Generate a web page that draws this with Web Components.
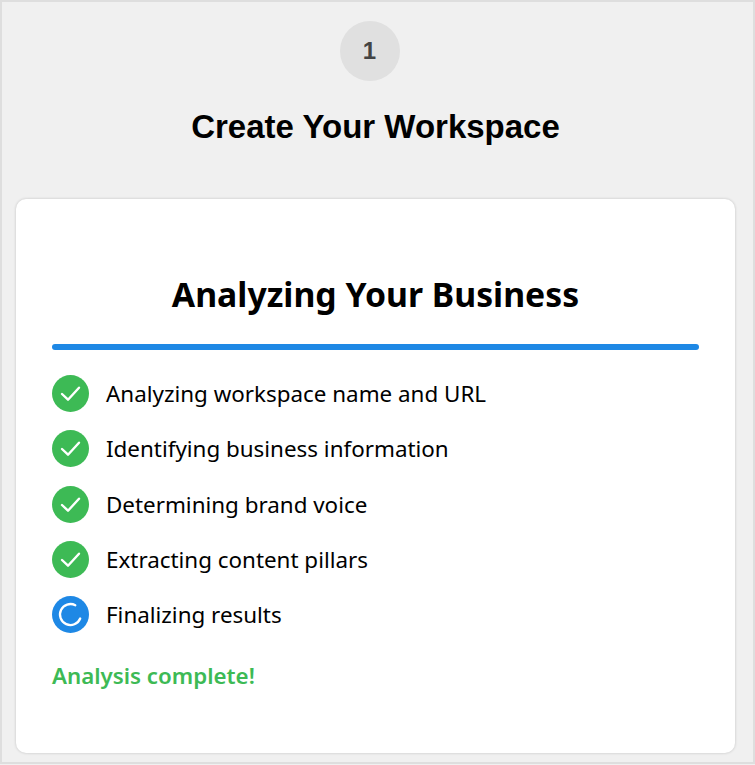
<!DOCTYPE html>
<html><head><meta charset="utf-8">
<style>
html,body{margin:0;padding:0;background:#f0f0f0}
body{width:755px;height:765px;overflow:hidden}
</style></head><body>
<wizard-frame>
  <step-header slot="head" step="1" title-text="Create Your Workspace"></step-header>
  <analysis-card heading="Analyzing Your Business" status="Analysis complete!">
    <task-row state="done">Analyzing workspace name and URL</task-row>
    <task-row state="done">Identifying business information</task-row>
    <task-row state="done">Determining brand voice</task-row>
    <task-row state="done">Extracting content pillars</task-row>
    <task-row state="active">Finalizing results</task-row>
  </analysis-card>
</wizard-frame>
<script>
function def(name, css, html){
  customElements.define(name, class extends HTMLElement{
    connectedCallback(){
      if(this.shadowRoot) return;
      const r=this.attachShadow({mode:'open'});
      r.innerHTML='<style>'+css+'</style>'+(typeof html==='function'?html(this):html);
    }
  });
}
def('wizard-frame',`
:host{display:flex;flex-direction:column;box-sizing:border-box;width:755px;height:764px;
 border:2px solid #dedede;background:#f0f0f0;padding:19px 18px 9px 14px}
`,`<slot name="head"></slot><slot></slot>`);
def('step-header',`
:host{display:flex;flex-direction:column;align-items:center;font-family:"Liberation Sans",Arial,sans-serif}
.n{width:60px;height:60px;border-radius:50%;background:#e0e0e0;color:#444;font-weight:700;font-size:24px;margin-right:12px;
 display:flex;align-items:center;justify-content:center}
h1{margin:27px 0 0;font-size:33px;line-height:38px;font-weight:700;color:#000}
`,e=>`<div class="n">${e.getAttribute('step')}</div><h1>${e.getAttribute('title-text')}</h1>`);
def('analysis-card',`
:host{display:block;box-sizing:border-box;margin-top:53px;height:554px;background:#fff;border-radius:10px;
 box-shadow:0 0 3px rgba(0,0,0,.2);padding:70px 36px 0 36px;font-family:"Noto Sans","Open Sans",sans-serif;color:#000}
h2{margin:0 0 25px;text-align:center;font-size:33.75px;line-height:50px;font-weight:700}
.bar{height:6px;border-radius:3px;background:#1e88e5;margin:0 0 25px;}
.list{display:flex;flex-direction:column;gap:18.25px}
.status{margin-top:28px;color:#3dba55;font-size:22.3px;line-height:30px;font-weight:600}
`,e=>`<h2>${e.getAttribute('heading')}</h2><div class="bar"></div><div class="list"><slot></slot></div><div class="status">${e.getAttribute('status')}</div>`);
def('task-row',`
:host{display:flex;align-items:center;gap:17px;height:37px;font-size:22.4px;color:#000}
svg{width:37px;height:37px;flex:none;display:block}
`,e=>{
 const done=e.getAttribute('state')==='done';
 const icon=done
  ?`<circle cx="18.5" cy="18.5" r="18.5" fill="#3dba55"/><path d="M10 19L16 24.7 27 12.7" fill="none" stroke="#fff" stroke-width="2.4" stroke-linecap="round" stroke-linejoin="round"/>`
  :`<circle cx="18.5" cy="18.5" r="18.5" fill="#1e88e5"/><path d="M23.3 9.2A10.5 10.5 0 1 0 28.2 22.5" fill="none" stroke="#fff" stroke-width="2.3" stroke-linecap="round"/>`;
 return `<svg viewBox="0 0 37 37">${icon}</svg><span><slot></slot></span>`;
});
</script>
</body></html>
